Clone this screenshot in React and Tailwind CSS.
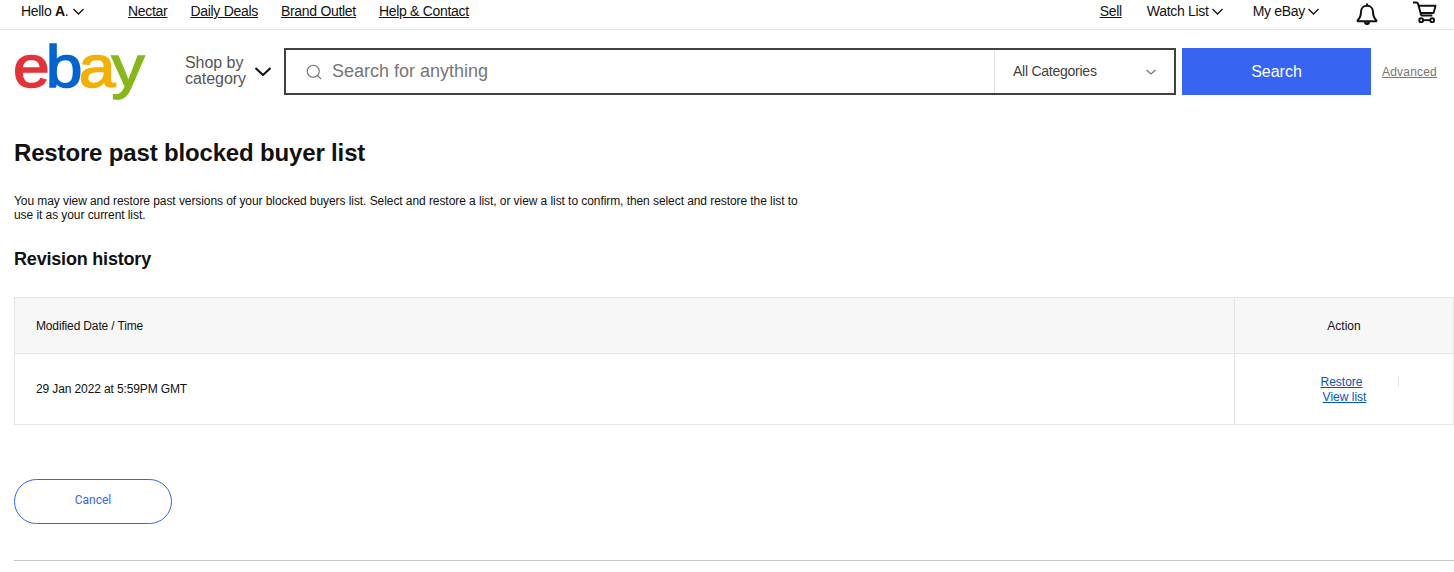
import { Search } from "lucide-react";

const font = { fontFamily: '"Liberation Sans", Arial, sans-serif' };

const Chev = ({ w = 11, h = 7, sw = 1.3, className = "" }) => (
    <svg width={w} height={h} viewBox={`0 0 ${w} ${h}`} fill="none" stroke="currentColor" strokeWidth={sw} className={className}>
        <path d={`M0.500 1 L${w / 2} ${h - 1} L${w - 0.5} 1`} />
    </svg>
);

const Bell = () => (
    <svg width="22" height="22" viewBox="0 0 24 24" fill="none" stroke="#111" strokeWidth="2.200">
        <path d="M12 3c-4.200 0-6.600 3-6.600 6.800 0 4.400-1 6.600-3.600 9v1h20.400v-1c-2.600-2.400-3.600-4.600-3.600-9 0-3.800-2.400-6.800-6.600-6.800z" strokeLinejoin="round" />
        <path d="M12 .5v2.500" />
        <path d="M9.500 21c.4 1.300 1.300 2 2.500 2s2.100-.7 2.500-2" fill="#111" />
    </svg>
);

const Cart = () => (
    <svg width="25" height="23" viewBox="0 0 26 24" fill="none" stroke="#111" strokeWidth="2">
        <path d="M1 1.500h3.500c1 0 1.500.5 1.800 1.500l3 11c.2.800.8 1.200 1.600 1.200h10.300" strokeLinejoin="round" />
        <path d="M6.500 5h18l-2 7.500H9" strokeLinejoin="round" />
        <circle cx="9.500" cy="20" r="2" />
        <circle cx="21" cy="20" r="2" />
        <path d="M11.500 20h7.500" />
    </svg>
);

const TopLink = ({ children }) => (
    <a href="#" className="text-[14px] leading-[20px] tracking-[-0.3px] text-[#111] underline">{children}</a>
);

const App = () => {
    return (
        <div style={font} className="bg-white h-[572px] overflow-hidden text-[#111]">
            {/* top bar */}
            <div className="h-[30px] border-b border-[#e5e5e5] flex items-start justify-between pl-[21px] pr-[17px] pt-[1px]">
                <div className="flex items-center">
                    <span className="text-[14px] leading-[20px] tracking-[-0.3px] flex items-center w-[107px]">
                        Hello&nbsp;<b>A</b>.
                        <Chev className="ml-[5px]" />
                    </span>
                    <div className="flex gap-[23px]">
                        <TopLink>Nectar</TopLink>
                        <TopLink>Daily Deals</TopLink>
                        <TopLink>Brand Outlet</TopLink>
                        <TopLink>Help &amp; Contact</TopLink>
                    </div>
                </div>
                <div className="flex items-start">
                    <TopLink>Sell</TopLink>
                    <span className="text-[14px] leading-[20px] tracking-[-0.3px] flex items-center ml-[25px]">
                        Watch List
                        <Chev className="ml-[3px]" />
                    </span>
                    <span className="text-[14px] leading-[20px] tracking-[-0.3px] flex items-center ml-[30px]">
                        My eBay
                        <Chev className="ml-[3px]" />
                    </span>
                    <span className="ml-[37px] mt-[2px]"><Bell /></span>
                    <span className="ml-[34px]"><Cart /></span>
                </div>
            </div>

            {/* header */}
            <div className="flex items-start pl-[14px] pt-[18px]">
                <div className="w-[171px] h-[47px] relative">
                    <div className="absolute left-[-1px] top-[-14px] text-[60px] leading-[66px] tracking-[-3.5px] whitespace-nowrap origin-left scale-x-[1.1]">
                        <span className="text-[#e53238] [-webkit-text-stroke:1.500px_#e53238]">e</span>
                        <span className="text-[#0064d2] [-webkit-text-stroke:1.500px_#0064d2]">b</span>
                        <span className="text-[#f5af02] [-webkit-text-stroke:1.500px_#f5af02]">a</span>
                        <span className="text-[#86b817] [-webkit-text-stroke:1.500px_#86b817]">y</span>
                    </div>
                </div>
                <button className="flex items-center h-[47px] w-[99px] text-left">
                    <span className="text-[16px] leading-[16px] tracking-[-0.05px] text-[#555] -mt-[2px]">Shop by<br />category</span>
                    <Chev w={16} h={9} sw={2} className="ml-[9px] text-[#111]" />
                </button>
                <div className="w-[892px] h-[47px] border-2 border-[#414141] flex items-center">
                    <Search size={18} strokeWidth={1.5} className="ml-[19px] text-[#767676]" />
                    <span className="text-[18px] text-[#767676] ml-[9px] flex-1">Search for anything</span>
                    <div className="w-[180px] h-full border-l border-[#e5e5e5] flex items-center justify-between pl-[18px] pr-[18px]">
                        <span className="text-[14px] tracking-[-0.25px] text-[#414141]">All Categories</span>
                        <Chev w={10} h={6} sw={1.3} className="text-[#767676]" />
                    </div>
                </div>
                <button className="w-[189px] h-[47px] ml-[6px] bg-[#3665f3] text-white text-[16px]">Search</button>
                <a href="#" className="ml-[11px] mt-[15px] text-[12px] tracking-[0.2px] text-[#767676] underline">Advanced</a>
            </div>

            {/* content */}
            <div className="pl-[14px]">
                <h1 className="mt-[42px] text-[24px] leading-[32px] tracking-[-0.16px] font-bold">Restore past blocked buyer list</h1>
                <p className="mt-[25px] w-[800px] text-[12px] leading-[14px] tracking-[-0.07px]">
                    You may view and restore past versions of your blocked buyers list. Select and restore a list, or view a list to confirm, then select and restore the list to use it as your current list.
                </p>
                <h2 className="mt-[25px] text-[18px] leading-[24px] tracking-[-0.19px] font-bold">Revision history</h2>

                <div className="mt-[26px] border border-[#e5e5e5] text-[12px]">
                    <div className="flex h-[56px] bg-[#f7f7f7] border-b border-[#e5e5e5]">
                        <div className="flex-1 flex items-center pl-[21px] tracking-[-0.15px]">Modified Date / Time</div>
                        <div className="w-[219px] border-l border-[#e5e5e5] flex items-center justify-center">Action</div>
                    </div>
                    <div className="flex h-[70px]">
                        <div className="flex-1 flex items-center pl-[21px] tracking-[-0.12px]">29 Jan 2022 at 5:59PM GMT</div>
                        <div className="w-[219px] border-l border-[#e5e5e5] flex flex-col items-center justify-center leading-[15px] relative pt-[2px]">
                            <a href="#" className="text-[#0654ba] underline -ml-[5px]">Restore</a>
                            <a href="#" className="text-[#0654ba] underline ml-[1px]">View list</a>
                            <span className="absolute left-[163px] top-[22px] w-px h-[11px] bg-[#e5e5e5]" />
                        </div>
                    </div>
                </div>

                <button className="mt-[54px] w-[158px] h-[45px] pb-[3px] rounded-full border border-[#3665f3] text-[#3665f3] text-[12px]" style={{ fontFamily: "Roboto, sans-serif" }}>Cancel</button>
                <div className="mt-[36px] border-t border-[#c7c7c7]" />
            </div>
        </div>
    );
};

export default App;
